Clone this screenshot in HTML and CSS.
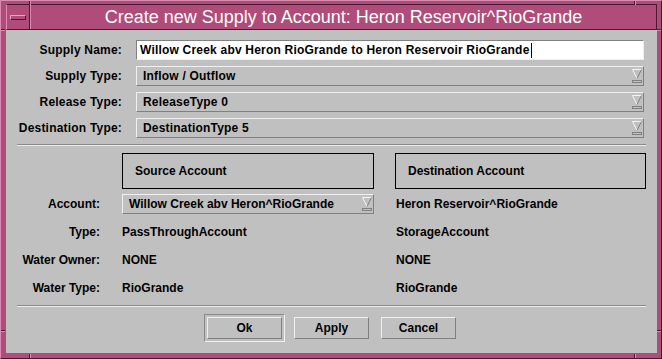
FILE: index.html
```html
<!DOCTYPE html>
<html lang="en">
<head>
  <meta charset="UTF-8">
  <title>Create new Supply to Account</title>
  <link rel="stylesheet" href="styles.css">
</head>
<body>
  <div class="window">
    <div class="grips">
      <span class="grip v" style="left:28px; top:0"></span>
      <span class="grip v" style="left:633px; top:0"></span>
      <span class="grip v" style="left:28px; bottom:0"></span>
      <span class="grip v" style="left:633px; bottom:0"></span>
      <span class="grip h" style="top:28px; left:0"></span>
      <span class="grip h" style="top:329px; left:0"></span>
      <span class="grip h" style="top:28px; right:0"></span>
      <span class="grip h" style="top:329px; right:0"></span>
    </div>

    <div class="titlebar">
      <div class="menu-btn"><span class="menu-bar"></span></div>
      <div class="title">Create new Supply to Account: Heron Reservoir^RioGrande</div>
    </div>

    <div class="client">
      <div class="form">
        <div class="label">Supply Name:</div>
        <div class="text-field">Willow Creek abv Heron RioGrande to Heron Reservoir RioGrande<span class="caret"></span></div>

        <div class="label">Supply Type:</div>
        <div class="option-menu">
          <span>Inflow / Outflow</span>
          <svg class="indicator" width="10" height="14" viewBox="0 0 10 14">
            <path d="M0.5 0.5 H9.5" stroke="#f4f4f4" />
            <path d="M0.5 0.5 L5 9.5" stroke="#f4f4f4" />
            <path d="M9.5 0.5 L5 9.5" stroke="#808080" />
            <rect x="0.5" y="11.5" width="9" height="2" fill="#c0c0c0" stroke="#808080" />
          </svg>
        </div>

        <div class="label">Release Type:</div>
        <div class="option-menu">
          <span>ReleaseType 0</span>
          <svg class="indicator" width="10" height="14" viewBox="0 0 10 14">
            <path d="M0.5 0.5 H9.5" stroke="#f4f4f4" />
            <path d="M0.5 0.5 L5 9.5" stroke="#f4f4f4" />
            <path d="M9.5 0.5 L5 9.5" stroke="#808080" />
            <rect x="0.5" y="11.5" width="9" height="2" fill="#c0c0c0" stroke="#808080" />
          </svg>
        </div>

        <div class="label">Destination Type:</div>
        <div class="option-menu">
          <span>DestinationType 5</span>
          <svg class="indicator" width="10" height="14" viewBox="0 0 10 14">
            <path d="M0.5 0.5 H9.5" stroke="#f4f4f4" />
            <path d="M0.5 0.5 L5 9.5" stroke="#f4f4f4" />
            <path d="M9.5 0.5 L5 9.5" stroke="#808080" />
            <rect x="0.5" y="11.5" width="9" height="2" fill="#c0c0c0" stroke="#808080" />
          </svg>
        </div>
      </div>

      <div class="separator"></div>

      <div class="accounts">
        <div></div>
        <div class="heading source">Source Account</div>
        <div class="heading dest">Destination Account</div>

        <div class="label">Account:</div>
        <div class="option-menu account">
          <span>Willow Creek abv Heron^RioGrande</span>
          <svg class="indicator" width="10" height="14" viewBox="0 0 10 14">
            <path d="M0.5 0.5 H9.5" stroke="#f4f4f4" />
            <path d="M0.5 0.5 L5 9.5" stroke="#f4f4f4" />
            <path d="M9.5 0.5 L5 9.5" stroke="#808080" />
            <rect x="0.5" y="11.5" width="9" height="2" fill="#c0c0c0" stroke="#808080" />
          </svg>
        </div>
        <div class="value dest">Heron Reservoir^RioGrande</div>

        <div class="label">Type:</div>
        <div class="value">PassThroughAccount</div>
        <div class="value dest">StorageAccount</div>

        <div class="label">Water Owner:</div>
        <div class="value">NONE</div>
        <div class="value dest">NONE</div>

        <div class="label">Water Type:</div>
        <div class="value">RioGrande</div>
        <div class="value dest">RioGrande</div>
      </div>

      <div class="separator bottom"></div>

      <div class="buttons">
        <span class="default-ring"><button class="btn">Ok</button></span>
        <button class="btn">Apply</button>
        <button class="btn">Cancel</button>
      </div>
    </div>
  </div>
</body>
</html>
```

FILE: styles.css
```css
body {
  margin: 0;
  font-family: "Liberation Sans", Arial, sans-serif;
  background-color: #c0c0c0;
}
.window {
  position: relative;
  width: 662px;
  height: 359px;
  box-sizing: border-box;
  display: flex;
  flex-direction: column;
  background-color: #b04c7a;
  border: 1px solid;
  border-color: #d98db0 #4c1732 #4c1732 #d98db0;
  padding: 3px 4px 5px 5px;
}
.grip {
  position: absolute;
  background-color: #4c1732;
  border-color: #d98db0;
  border-style: solid;
  border-width: 0;
}
.grip.v {
  width: 1px;
  height: 4px;
  border-right-width: 1px;
}
.grip.h {
  width: 4px;
  height: 1px;
  border-bottom-width: 1px;
}
.titlebar {
  display: flex;
  height: 26px;
  box-sizing: border-box;
  border: 1px solid;
  border-color: #4c1732 #4c1732 #4c1732 #d98db0;
}
.menu-btn {
  width: 22px;
  border-right: 1px solid #4c1732;
  display: flex;
  align-items: center;
  justify-content: center;
}
.menu-bar {
  width: 14px;
  height: 3px;
  border: 1px solid;
  border-color: #e6a3c2 #4c1732 #4c1732 #e6a3c2;
}
.title {
  flex: 1;
  text-align: center;
  color: #ffffff;
  font-size: 18px;
  line-height: 24px;
  border-left: 1px solid #d98db0;
}
.client {
  flex: 1;
  background-color: #c0c0c0;
  font-size: 12px;
  font-weight: bold;
  color: #000;
}
.form {
  display: grid;
  grid-template-columns: 116px 508px;
  grid-auto-rows: 20px;
  column-gap: 14px;
  row-gap: 6px;
  padding-top: 10px;
  letter-spacing: 0.2px;
}
.label {
  text-align: right;
  align-self: center;
}
.text-field {
  box-sizing: border-box;
  background-color: #fff;
  border: 1px solid;
  border-color: #808080 #f0f0f0 #f0f0f0 #808080;
  padding-left: 3px;
  display: flex;
  align-items: center;
  white-space: nowrap;
}
.caret {
  display: inline-block;
  width: 1px;
  height: 15px;
  background-color: #000;
  margin-left: 1px;
}
.option-menu {
  box-sizing: border-box;
  display: flex;
  align-items: center;
  justify-content: space-between;
  border: 1px solid;
  border-color: #f0f0f0 #808080 #808080 #f0f0f0;
  padding: 0 1px 0 6px;
  white-space: nowrap;
}
.indicator {
  display: block;
}
.separator {
  margin: 6px 11px 0 11px;
  border-top: 1px solid #8a8a8a;
  border-bottom: 1px solid #ececec;
}
.separator.bottom {
  margin-top: 3px;
}
.accounts {
  display: grid;
  grid-template-columns: 116px 273px 1fr;
  grid-template-rows: 37px repeat(4, 28px);
  margin-top: 7px;
  padding-right: 11px;
}
.accounts .label {
  padding-right: 22px;
}
.heading {
  box-sizing: border-box;
  height: 36px;
  border: 1px solid #000;
  padding-left: 12px;
  display: flex;
  align-items: center;
}
.heading.source {
  width: 252px;
}
.option-menu.account {
  width: 252px;
  height: 20px;
  align-self: center;
}
.value {
  align-self: center;
  white-space: nowrap;
}
.value.dest {
  padding-left: 1px;
}
.buttons {
  display: flex;
  justify-content: center;
  gap: 12px;
  margin-top: 10px;
}
.btn {
  width: 75px;
  height: 22px;
  box-sizing: border-box;
  padding: 0;
  background-color: #c0c0c0;
  border: 1px solid;
  border-color: #f0f0f0 #7f7f7f #7f7f7f #f0f0f0;
  font-family: inherit;
  font-size: 12px;
  font-weight: bold;
  color: #000;
}
.default-ring {
  display: flex;
  margin: -3px;
  padding: 2px;
  border: 1px solid;
  border-color: #8a8a8a #f0f0f0 #f0f0f0 #8a8a8a;
}
```
